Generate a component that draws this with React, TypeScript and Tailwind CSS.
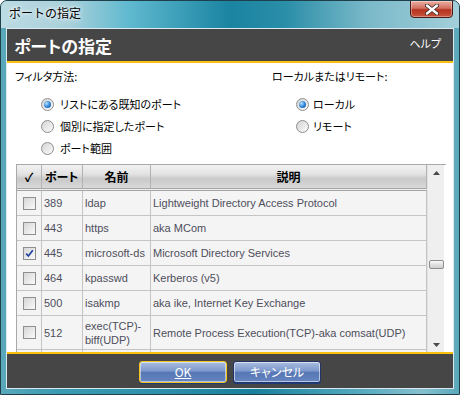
import React from "react";

type Row = { checked: boolean; port: string; name: string; desc: string; tall?: boolean };

const rows: Row[] = [
  { checked: false, port: "389", name: "ldap", desc: "Lightweight Directory Access Protocol" },
  { checked: false, port: "443", name: "https", desc: "aka MCom" },
  { checked: true, port: "445", name: "microsoft-ds", desc: "Microsoft Directory Services" },
  { checked: false, port: "464", name: "kpasswd", desc: "Kerberos (v5)" },
  { checked: false, port: "500", name: "isakmp", desc: "aka ike, Internet Key Exchange" },
  { checked: false, port: "512", name: "exec(TCP)-\nbiff(UDP)", desc: "Remote Process Execution(TCP)-aka comsat(UDP)", tall: true },
];

const Radio = ({ checked }: { checked?: boolean }) => (
  <span className="w-[13px] h-[13px] rounded-full border border-[#8c8e8f] bg-gradient-to-br from-[#d4d4d4] to-[#fbfbfb] flex items-center justify-center shrink-0">
    {checked && (
      <span className="w-[7px] h-[7px] rounded-full bg-[radial-gradient(circle_at_35%_35%,#b8e2ff,#2a7fd4_55%,#0f4f9c)]" />
    )}
  </span>
);

const CheckBox = ({ checked }: { checked?: boolean }) => (
  <span className="w-[13px] h-[13px] border border-[#8e8f8f] bg-gradient-to-br from-[#d6d6d6] to-[#fafafa] flex items-center justify-center">
    {checked && (
      <svg width="9" height="9" viewBox="0 0 9 9">
        <path d="M1.2 4.6 L3.4 7 L7.8 1.3" stroke="#1f3fa0" strokeWidth="1.6" fill="none" />
      </svg>
    )}
  </span>
);

const jp = "font-['Noto_Sans_CJK_JP',sans-serif] [font-feature-settings:'palt']";
const cell = "border-r border-b border-[#c4c4c4] flex items-center";

export default function App() {
  return (
    <div className="w-[460px] h-[395px] flex flex-col rounded-t-[7px] border border-[#1f3f4a] bg-[linear-gradient(90deg,#5aa8ba,#3a9ab2_12%,#2d90aa_35%,#17809c_55%,#4ca4ba_75%,#86c0ce_92%,#5aa8ba)] overflow-hidden">
      {/* title bar */}
      <div className="h-[27px] flex items-start justify-between pl-[7px] bg-[linear-gradient(90deg,#bcdbe3,#a8d0da_15%,#5fb9cf_28%,#1a84a1_50%,#2a8ea8_62%,#7ab9c9_80%,#a3cfda)]">
        <span className="mt-[4px] px-[1px] text-[12px] leading-[16px] text-black font-['Noto_Sans_CJK_JP',sans-serif] [text-shadow:0_0_6px_#ffffff,0_0_3px_#ffffff]">
          ポートの指定
        </span>
        <div className="mr-[6px] w-[43px] h-[18px] -mt-[1px] rounded-b-[4px] border border-[#4a1a14] bg-[linear-gradient(#eab0a4,#d2705f_45%,#b4321f_55%,#c8543d)] shadow-[inset_0_0_0_1px_rgba(255,255,255,0.35)] flex items-center justify-center">
          <svg width="14" height="11" viewBox="0 0 14 11">
            <path d="M2 1.5 L12 9.5 M12 1.5 L2 9.5" stroke="#3a2a28" strokeWidth="4" strokeLinecap="round" />
            <path d="M2 1.5 L12 9.5 M12 1.5 L2 9.5" stroke="#ffffff" strokeWidth="2.4" strokeLinecap="round" />
          </svg>
        </div>
      </div>

      {/* client */}
      <div className="mx-[5px] mb-[5px] flex-1 flex flex-col border border-[#d8eaef] bg-white overflow-hidden">
        {/* header */}
        <div className="h-[34px] shrink-0 bg-[#464646] border-b-2 border-[#fbbf0e] flex items-center justify-between pl-[7px] pr-[12px]">
          <span className={`${jp} text-white text-[17px] font-bold leading-[20px] mt-[2px]`}>ポートの指定</span>
          <span className={`${jp} text-white text-[11px] -mt-[4px]`}>ヘルプ</span>
        </div>

        {/* content */}
        <div className="flex-1 flex flex-col pt-[5px] pl-[8px] pr-[7px] overflow-hidden">
          <div className={`${jp} flex text-[11px] text-black`}>
            <div className="w-[257px]">
              <div className="leading-[16px]">フィルタ方法:</div>
              <div className="mt-[9px] pl-[26px] flex flex-col">
                <label className="h-[22px] flex items-center gap-[6px]">
                  <Radio checked />
                  <span>リストにある既知のポート</span>
                </label>
                <label className="h-[22px] flex items-center gap-[6px]">
                  <Radio />
                  <span>個別に指定したポート</span>
                </label>
                <label className="h-[22px] flex items-center gap-[6px]">
                  <Radio />
                  <span>ポート範囲</span>
                </label>
              </div>
            </div>
            <div>
              <div className="leading-[16px]">ローカルまたはリモート:</div>
              <div className="mt-[9px] pl-[24px] flex flex-col">
                <label className="h-[22px] flex items-center gap-[4px]">
                  <Radio checked />
                  <span>ローカル</span>
                </label>
                <label className="h-[22px] flex items-center gap-[4px]">
                  <Radio />
                  <span>リモート</span>
                </label>
              </div>
            </div>
          </div>

          {/* table */}
          <div className="mt-[5px] ml-[1px] flex-1 flex border-l border-t border-[#a9a9a9] overflow-hidden">
            <div className="w-[410px] flex flex-col">
              <div className={`${jp} h-[26px] shrink-0 grid grid-cols-[25px_41px_68px_276px] text-[12px] font-bold text-black bg-[linear-gradient(#f2f2f2,#e2e2e2_40%,#c9c9c9_60%,#d9d9d9)] border-b-[3px] border-double border-[#a5a5a5]`}>
                <div className="border-r border-[#b3b3b3] flex items-center justify-center">✓</div>
                <div className="border-r border-[#b3b3b3] flex items-center pl-[3px]">ポート</div>
                <div className="border-r border-[#b3b3b3] flex items-center justify-center">名前</div>
                <div className="border-r border-[#b3b3b3] flex items-center justify-center">説明</div>
              </div>
              {rows.map((r) => (
                <div
                  key={r.port}
                  className={`grid grid-cols-[25px_41px_68px_276px] shrink-0 bg-[#f4f4f4] text-[11px] leading-[14px] text-[#4e4e5c] font-['Liberation_Sans',Arial,sans-serif] ${r.tall ? "h-[34px]" : "h-[25px]"}`}
                >
                  <div className={`${cell} justify-center`}>
                    <CheckBox checked={r.checked} />
                  </div>
                  <div className={`${cell} pl-[2px]`}>{r.port}</div>
                  <div className={`${cell} pl-[2px] whitespace-pre`}>{r.name}</div>
                  <div className={`${cell} pl-[2px] whitespace-nowrap overflow-hidden`}>{r.desc}</div>
                </div>
              ))}
              {/* partly hidden next row */}
              <div className="grid grid-cols-[25px_41px_68px_276px] h-[34px] shrink-0 bg-[#f4f4f4] text-[11px] leading-[14px] text-[#4e4e5c] font-['Liberation_Sans',Arial,sans-serif]">
                <div className="border-r border-[#c4c4c4]" />
                <div className="border-r border-[#c4c4c4]" />
                <div className="border-r border-[#c4c4c4] pl-[2px] pt-[3px]">login(TCP)-</div>
                <div className="border-r border-[#c4c4c4]" />
              </div>
            </div>
            {/* scrollbar */}
            <div className="w-[17px] shrink-0 bg-[#efefef] border-l border-[#e2e2e2] flex flex-col items-center">
              <svg width="7" height="4" viewBox="0 0 7 4" className="mt-[6px]">
                <path d="M3.5 0 L7 4 L0 4 Z" fill="#4a4a4a" />
              </svg>
              <div className="mt-[85px] w-[15px] h-[9px] rounded-[2px] border border-[#8d8d8d] bg-[linear-gradient(#fafafa,#e0e0e0_50%,#cfcfcf)]" />
              <div className="flex-1" />
              <svg width="7" height="4" viewBox="0 0 7 4" className="mb-[5px]">
                <path d="M0 0 L7 0 L3.5 4 Z" fill="#4a4a4a" />
              </svg>
            </div>
          </div>
        </div>

        {/* footer */}
        <div className="h-[36px] shrink-0 bg-[#464646] border-t-2 border-[#fbbf0e] flex justify-center gap-[6px] pt-[7px]">
          <button className={`${jp} w-[88px] h-[22px] rounded-[3px] border border-[#f4c51c] bg-[linear-gradient(#a8bde0,#7d98cb_45%,#5677b5_52%,#6685c0)] shadow-[inset_0_0_0_1px_rgba(255,255,255,0.5),0_1px_0_#1d3a7a] text-white text-[12px] leading-[20px]`}>
            <span className="underline">OK</span>
          </button>
          <button className={`${jp} w-[88px] h-[22px] rounded-[3px] border border-[#22336a] bg-[linear-gradient(#a8bde0,#7d98cb_45%,#5677b5_52%,#6685c0)] shadow-[inset_0_0_0_1px_rgba(255,255,255,0.55),0_1px_0_#1d3a7a] text-white text-[12px] leading-[20px]`}>
            キャンセル
          </button>
        </div>
      </div>
    </div>
  );
}
